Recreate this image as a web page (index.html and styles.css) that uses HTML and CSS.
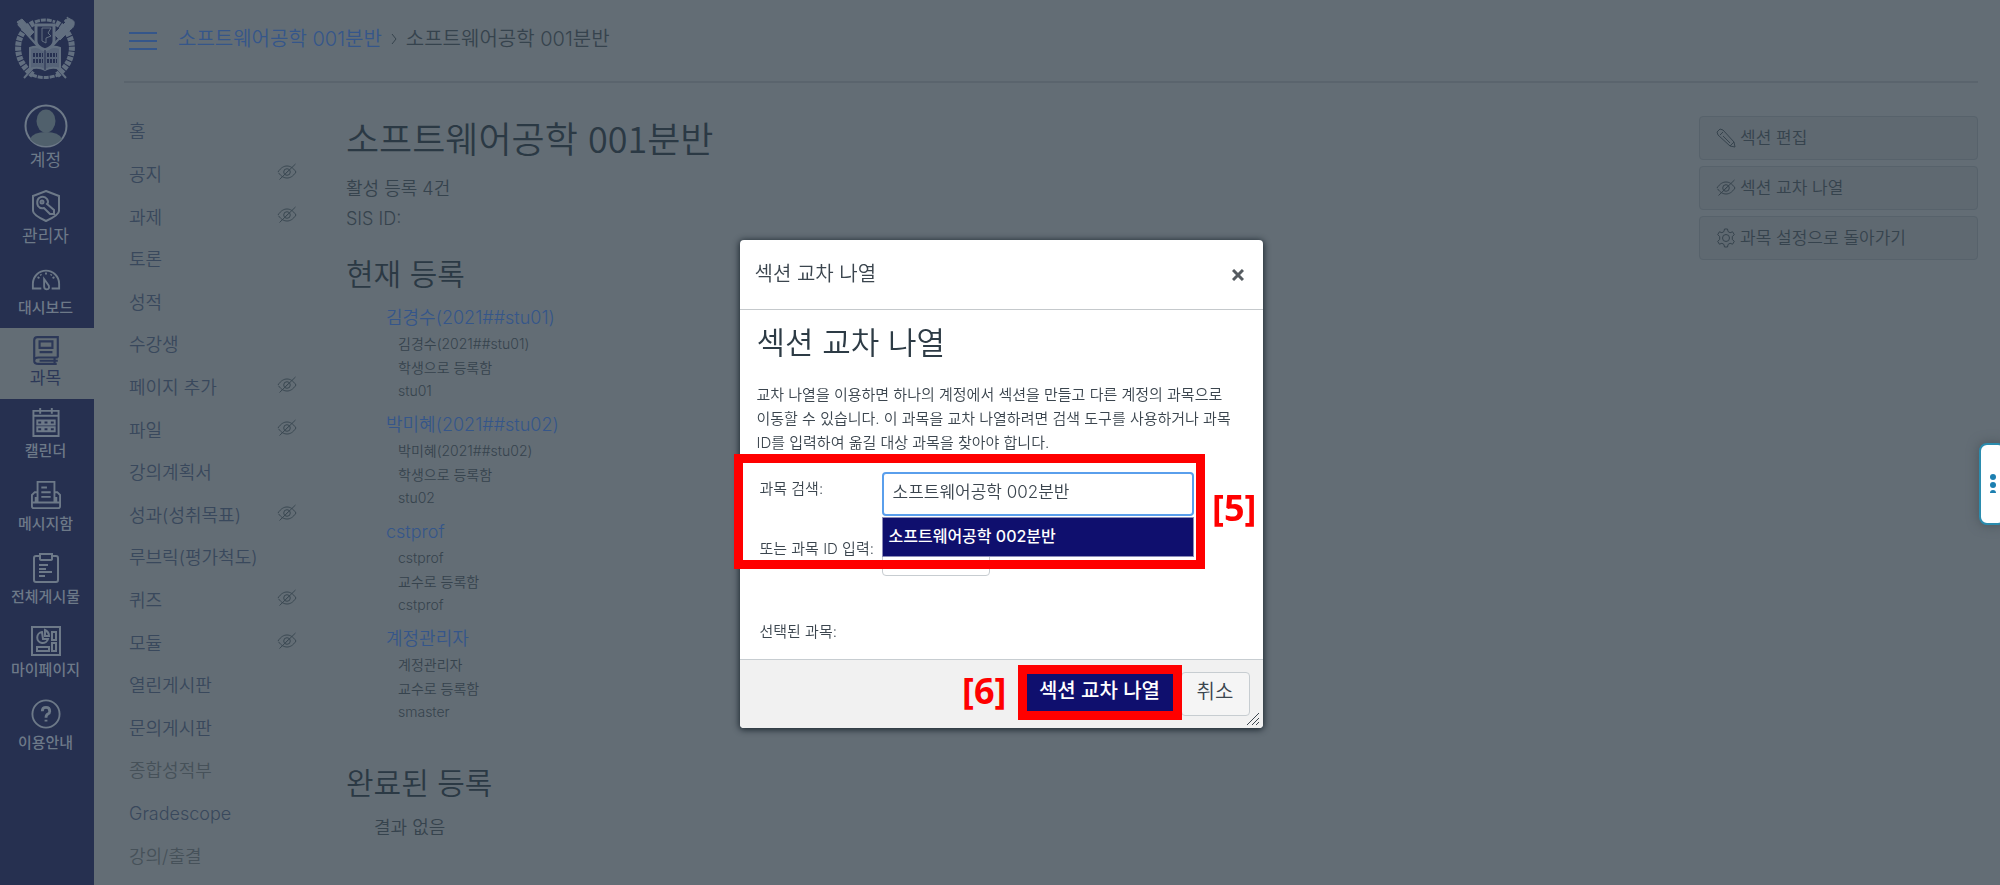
FILE: index.html
```html
<!DOCTYPE html>
<html lang="ko">
<head>
<meta charset="utf-8">
<title>소프트웨어공학 001분반</title>
<link rel="stylesheet" href="styles.css">
</head>
<body>
<svg class="defs" aria-hidden="true">
  <symbol id="eye-off" viewBox="0 0 20 18"><path d="M1 9C4 4.500 7 3 10 3s6 1.500 9 6c-3 4.500-6 6-9 6S4 13.500 1 9z" stroke-dasharray="44 3"/><circle cx="10" cy="9" r="3.300"/><path d="M2.500 16.500L18.500 1M8.500 10.500l3-3"/></symbol>
</svg>
<div class="app">
  <nav class="rail" aria-label="전역 탐색">
    <a class="crest" href="#" aria-label="서울대학교">
      <svg viewBox="0 0 62 66">
        <g stroke="#626f80" fill="none">
          <path d="M4 8l48 54M58 8L10 62" stroke-width="2"/>
          <path d="M3 6l5-3 12 13-5 5z" fill="#626f80"/>
          <path d="M40 18l12-12 6 6-12 12z" fill="#626f80"/>
          <path d="M51 6c-2-4 4-1 2-5 5 4 8 2 7 8-1 4-4 5-7 4" fill="#626f80"/>
          <path d="M20 7C0 16-2 44 19 59M42 7c20 9 22 37 1 52" stroke-width="6" stroke-dasharray="4 1"/>
          <path d="M18 59q13 5 26 0M21 6q10-4 20 0" stroke-width="3" stroke-dasharray="5 1"/>
          <path d="M16 32q8-3 15 2 7-5 15-2v21q-8-3-15 1-7-4-15-1z" fill="#566378" stroke-width="2"/>
          <path d="M22 9h18v16q0 6-9 9-9-3-9-9z" fill="#263050" stroke-width="3"/>
          <path d="M28 12h9l-3 5 3 3-5 2v5l-4-2z" stroke-width="1"/>
          <path d="M19 39h10M19 45h10M33 39h10M33 45h10" stroke="#263050" stroke-width="4" stroke-dasharray="2 1"/>
          <path d="M31 34v20" stroke="#263050"/>
        </g>
      </svg>
    </a>
    <a class="rail-item account" href="#">
      <svg class="avatar" viewBox="0 0 44 44"><circle cx="22" cy="22" r="20.500" fill="#263050"/><path d="M6 35q3-7 16-7t16 7q-6 7-16 7T6 35z" fill="#50606c" stroke="none"/><ellipse cx="22" cy="17" rx="9.500" ry="11.500" fill="#50606c" stroke="none"/></svg>
      <span>계정</span></a>
    <a class="rail-item admin" href="#">
      <svg viewBox="0 0 32 32"><path d="M16 1l13 5v15q0 4-13 10Q3 25 3 21V6z"/><path d="M9 8q5-3 8 1 2 3 0 5l7 6v4h-4l-6-6q-4 1-6-2-2-5 1-8z"/><circle cx="12" cy="12" r="1.500"/></svg>
      <span>관리자</span></a>
    <a class="rail-item dash small" href="#">
      <svg viewBox="0 0 32 24"><path d="M11 21H2v-5a14 14 0 0 1 28 0v5h-8"/><path d="M14 11l5 7q1 4-2 4-3 0-3-3z"/><path d="M16 4v2M7 9l2 1M25 9l-2 1M10 6l1 1M22 6l-1 1"/></svg>
      <span>대시보드</span></a>
    <a class="rail-item active" href="#">
      <svg viewBox="0 0 28 28"><path d="M25 21V2H6Q3 2 3 5v18M25 21H7q-4 0-4 3t4 3h17M8 24h17M22 21v6M8 6h12v6H8zM8 16h12"/></svg>
      <span>과목</span></a>
    <a class="rail-item small" href="#">
      <svg viewBox="0 0 30 31"><path d="M2 4h26v26H2zM2 9h26M9 1v6M21 1v6M6 14h5v4H6zM12.500 14h5v4h-5zM19 14h5v4h-5zM6 21h5v4H6zM12.500 21h5v4h-5zM19 21h5v4h-5z"/></svg>
      <span>캘린더</span></a>
    <a class="rail-item small" href="#">
      <svg viewBox="0 0 32 30"><path d="M7 23V1h18v22M7 12H4l-3 3v12q0 2 2 2h26q2 0 2-2V15l-3-3h-3M1 23h30M5 17v6M27 17v6M11 7h6M11 12h10M11 17h10"/></svg>
      <span>메시지함</span></a>
    <a class="rail-item small" href="#">
      <svg viewBox="0 0 30 30"><path d="M9 3H5Q3 3 3 5v22q0 2 2 2h20q2 0 2-2V5q0-2-2-2h-4M9 1h12v5q0 1-2 1h-8q-2 0-2-1zM8 12h9M8 16h7M8 19h13M8 23h6"/></svg>
      <span>전체게시물</span></a>
    <a class="rail-item small" href="#">
      <svg viewBox="0 0 30 30"><path d="M1 1h28v28H1z"/><path d="M11 6a5.500 5.500 0 1 0 6 7h-5zM14 4v6h4q0-4-4-6zM21 6h4v8h-4zM21 17h4v8h-4zM6 21h12v4H6z"/></svg>
      <span>마이페이지</span></a>
    <a class="rail-item small" href="#">
      <svg class="help" viewBox="0 0 32 32"><circle cx="16" cy="16" r="14.500"/><path d="M12 13q0-4 4-4t4 4q0 2-2 3-2 1-2 4M16 22v2" stroke-width="3"/></svg>
      <span>이용안내</span></a>
  </nav>

  <div class="page">
    <header class="topbar">
      <button class="burger" type="button" aria-label="메뉴"><i></i><i></i><i></i></button>
      <a href="#">소프트웨어공학 001분반</a>
      <svg class="chev" viewBox="0 0 6 12"><path d="M1 1l4 5-4 5"/></svg>
      <span>소프트웨어공학 001분반</span>
    </header>
    <div class="columns">
      <nav class="menu" aria-label="과목 메뉴">
        <a href="#">홈</a>
        <a href="#">공지<svg><use href="#eye-off"/></svg></a>
        <a href="#">과제<svg><use href="#eye-off"/></svg></a>
        <a href="#">토론</a>
        <a href="#">성적</a>
        <a href="#">수강생</a>
        <a href="#">페이지 추가<svg><use href="#eye-off"/></svg></a>
        <a href="#">파일<svg><use href="#eye-off"/></svg></a>
        <a href="#">강의계획서</a>
        <a href="#">성과(성취목표)<svg><use href="#eye-off"/></svg></a>
        <a href="#">루브릭(평가척도)</a>
        <a href="#">퀴즈<svg><use href="#eye-off"/></svg></a>
        <a href="#">모듈<svg><use href="#eye-off"/></svg></a>
        <a href="#">열린게시판</a>
        <a href="#">문의게시판</a>
        <a class="dim" href="#">종합성적부</a>
        <a href="#">Gradescope</a>
        <a class="dim" href="#">강의/출결</a>
      </nav>
      <main class="content">
        <h1>소프트웨어공학 001분반</h1>
        <p>활성 등록 4건</p>
        <p>SIS ID:</p>
        <h2>현재 등록</h2>
        <ul class="users">
          <li><a href="#">김경수(2021##stu01)</a><div>김경수(2021##stu01)</div><div>학생으로 등록함</div><div>stu01</div></li>
          <li><a href="#">박미혜(2021##stu02)</a><div>박미혜(2021##stu02)</div><div>학생으로 등록함</div><div>stu02</div></li>
          <li><a href="#">cstprof</a><div>cstprof</div><div>교수로 등록함</div><div>cstprof</div></li>
          <li><a href="#">계정관리자</a><div>계정관리자</div><div>교수로 등록함</div><div>smaster</div></li>
        </ul>
        <h2>완료된 등록</h2>
        <p class="none">결과 없음</p>
      </main>
      <aside class="actions">
        <button type="button"><svg viewBox="0 0 20 20"><path d="M1 4l3-3 3 1 11 12 1 5-5-1L2 7zM4 7l3-3M14 18l4-4M7 8l7 7"/></svg>섹션 편집</button>
        <button type="button"><svg><use href="#eye-off"/></svg>섹션 교차 나열</button>
        <button type="button"><svg viewBox="0 0 20 20"><path d="M8.500 1h3l.6 2.600 2 1.100 2.500-.9 1.700 2.900-2 1.800v3l2 1.800-1.700 2.900-2.500-.9-2 1.100-.6 2.600h-3l-.6-2.600-2-1.100-2.500.9-1.700-2.900 2-1.800v-3l-2-1.800 1.700-2.900 2.500.9 2-1.100z"/><circle cx="10" cy="10" r="3.500"/></svg>과목 설정으로 돌아가기</button>
      </aside>
    </div>
  </div>
</div>

<div class="backdrop">
  <section class="dialog" role="dialog" aria-labelledby="dlg-title">
    <header class="dlg-head">
      <span id="dlg-title">섹션 교차 나열</span>
      <button type="button" aria-label="닫기"><svg viewBox="0 0 12 12"><path d="M1 1l10 10M11 1L1 11"/></svg></button>
    </header>
    <form class="dlg-body">
      <h2>섹션 교차 나열</h2>
      <p>교차 나열을 이용하면 하나의 계정에서 섹션을 만들고 다른 계정의 과목으로 이동할 수 있습니다. 이 과목을 교차 나열하려면 검색 도구를 사용하거나 과목 ID를 입력하여 옮길 대상 과목을 찾아야 합니다.</p>
      <div class="fields">
        <label for="q">과목 검색:</label>
        <div class="combo">
          <input id="q" type="text" value="소프트웨어공학 002분반">
          <div class="options" role="listbox"><div role="option" aria-selected="true">소프트웨어공학 002분반</div></div>
        </div>
        <label for="cid">또는 과목 ID 입력:</label>
        <input id="cid" class="short" type="text">
        <div class="mark mark-fields"></div>
        <strong class="num num-fields">[5]</strong>
      </div>
      <div class="chosen">선택된 과목:</div>
    </form>
    <footer class="dlg-foot">
      <strong class="num">[6]</strong>
      <div class="primary-wrap"><button class="primary" type="button">섹션 교차 나열</button><div class="mark mark-btn"></div></div>
      <button class="cancel" type="button">취소</button>
      <svg class="grip" viewBox="0 0 14 14"><path d="M1 13L13 1M6 13l7-7M10 13l3-3"/></svg>
    </footer>
  </section>
</div>
<button class="tab" type="button" aria-label="더 보기"><svg viewBox="0 0 8 20"><circle cx="4" cy="3" r="3"/><circle cx="4" cy="11" r="3"/><path d="M1 19a3 3 0 0 1 6 0z"/></svg></button>
</body>
</html>
```
FILE: styles.css
```css
* { box-sizing: border-box; }
body {
  margin: 0;
  background: #636d75;
  color: #36434d;
  font: 18px/24px Inter, "Noto Sans CJK KR", sans-serif;
  font-weight: 350;
}
a { color: inherit; text-decoration: none; }
button, input { font: inherit; color: inherit; margin: 0; }
h1, h2, p, ul { margin: 0; padding: 0; font-weight: 350; }
svg { display: block; fill: none; stroke: currentColor; }
.defs { position: absolute; width: 0; height: 0; }

.app { display: flex; height: 100vh; min-height: 760px; overflow: hidden; }

/* Global rail */
.rail {
  flex: 0 0 94px;
  background: #263050;
  color: #6d7988;
  text-align: center;
  padding-top: 16px;
}
.crest { display: block; margin: 0 16px 22px 14px; }
.crest svg { width: 62px; height: 66px; }
.rail-item {
  display: flex;
  flex-direction: column;
  align-items: center;
  gap: 2px;
  height: 73px;
  padding: 8px 3px 0 0;
  font-size: 17px;
  font-weight: 400;
  line-height: 24px;
}
.rail-item svg { width: 30px; height: 30px; stroke-width: 2; }
.rail-item .avatar { width: 44px; height: 44px; margin: -8px 0 -2px; }
.rail-item.account { height: 77px; }
.rail-item.admin { padding-top: 9px; height: 77px; }
.rail-item.admin svg { width: 32px; height: 32px; }
.rail-item.dash { height: 70px; }
.rail-item.dash svg { height: 28px; }
.rail-item.active { background: #636d75; color: #2c3858; height: 71px; padding-top: 7px; gap: 1px; }
.rail .small { font-size: 15px; font-weight: 500; }

/* Page */
.page { flex: 1; display: flex; flex-direction: column; padding: 0 22px 0 30px; }
.topbar {
  display: flex;
  align-items: center;
  height: 83px;
  padding: 0 0 4px 5px;
  border-bottom: 2px solid #5a646d;
  font-size: 20px;
}
.topbar a { color: #35568a; }
.burger {
  display: flex;
  flex-direction: column;
  gap: 6px;
  width: 28px;
  margin-right: 21px;
  padding: 4px 0 0;
  border: 0;
  background: none;
}
.burger i { height: 2px; background: #35568a; }
.chev { width: 6px; height: 12px; margin: 0 9px; }
.columns { flex: 1; display: flex; padding-left: 5px; }
.menu {
  width: 168px;
  display: flex;
  flex-direction: column;
  padding: 28px 0 7px;
  color: #39485c;
}
.menu a { flex: 1; display: flex; align-items: center; justify-content: space-between; }
.menu svg { width: 20px; height: 18px; margin-bottom: 6px; color: #3a4852; }
.menu .dim { color: #465159; }

.content { flex: 1; padding: 24px 0 0 49px; }
.content h1 { font-size: 36px; line-height: 60px; margin-bottom: 7px; color: #2b3944; font-family: "Noto Sans CJK KR", sans-serif; }
.content h2 { font-size: 30px; line-height: 40px; color: #2b3944; }
.content p { line-height: 30px; }
.content p + h2 { margin-top: 20px; }
.users { list-style: none; padding: 10px 0 0 40px; }
.users li { padding-left: 12px; margin-bottom: 9px; font-size: 14px; }
.users a { display: block; margin-left: -12px; font-size: 18px; line-height: 28px; color: #35568a; }
.users div { line-height: 24px; }
.users div:last-child { line-height: 22px; }
.content .users + h2 { margin-top: 40px; }
.content .none { padding-left: 28px; margin-top: 10px; }

.actions { width: 279px; display: flex; flex-direction: column; gap: 6px; padding-top: 33px; font-size: 17px; }
.actions button {
  display: flex;
  align-items: center;
  gap: 4px;
  height: 44px;
  padding: 0 16px;
  border: 1px solid #57626b;
  border-radius: 4px;
  background: #5f6971;
}
.actions svg { width: 20px; height: 20px; }

/* Dialog */
.backdrop { position: fixed; inset: 0; display: flex; justify-content: center; align-items: flex-start; padding: 240px 0 0 2px; }
.dialog {
  width: 523px;
  background: #fff;
  border-radius: 4px;
  box-shadow: 0 1px 6px 1px #1f2a33;
  color: #3b454e;
}
.dlg-head {
  display: flex;
  align-items: center;
  justify-content: space-between;
  height: 70px;
  padding: 0 19px 2px 15px;
  border-bottom: 1px solid #c5c9cc;
  font-size: 20px;
}
.dlg-head button { border: 0; padding: 3px 0 0; background: none; color: #555b60; }
.dlg-head svg { width: 12px; height: 12px; stroke-width: 3; }
.dlg-body { padding: 11px 14px 15px 17px; font-size: 15px; }
.dlg-body h2 { font-size: 31px; line-height: 44px; margin-bottom: 18px; color: #2d3b45; }
.dlg-body p { line-height: 24px; margin-bottom: 17px; padding-right: 6px; word-break: keep-all; }
.fields {
  position: relative;
  display: grid;
  grid-template-columns: 119px 312px;
  column-gap: 3px;
  row-gap: 16px;
  padding-left: 3px;
}
.fields label { padding-top: 5px; white-space: nowrap; }
.fields input {
  display: block;
  width: 100%;
  height: 44px;
  padding: 0 9px 8px;
  border: 1px solid #c7cdd1;
  border-radius: 4px;
  background: #fff;
  font-size: 17px;
}
.combo { position: relative; }
.fields .combo input { border: 2px solid #5a9fec; outline: 0; }
.fields .short { width: 108px; }
.options {
  position: absolute;
  top: 45px;
  left: 0;
  right: 0;
  padding: 6px 6px 8px;
  border: 1px solid #8c8cb8;
  background: #0f0f6e;
  color: #fff;
  font-size: 16px;
  font-weight: 500;
}
.mark { position: absolute; border: 9px solid #f00; pointer-events: none; }
.mark-fields { inset: -18px 44px 7px -23px; }
.num { color: #f00; font: 700 36px/40px "Noto Sans", sans-serif; }
.num-fields { position: absolute; top: 16px; right: -8px; }
.chosen { padding: 44px 0 0 3px; }
.dlg-foot {
  position: relative;
  display: flex;
  align-items: flex-start;
  justify-content: flex-end;
  height: 69px;
  padding: 12px 13px 0 0;
  border-top: 1px solid #c7cdd1;
  border-radius: 0 0 4px 4px;
  background: #f1f1f1;
  font-size: 20px;
}
.dlg-foot .num { margin-top: -1px; }
.primary-wrap { position: relative; margin: 2px 9px 0 20px; }
.primary { display: block; width: 146px; height: 37px; padding: 0 0 3px; border: 0; background: #0f0f6e; color: #fff; font-size: 20px; font-weight: 500; }
.mark-btn { inset: -9px; }
.cancel { width: 69px; height: 44px; margin-left: -1px; padding: 0 0 4px; border: 1px solid #c7cdd1; border-radius: 4px; background: #f5f5f5; }
.grip { position: absolute; right: 3px; bottom: 2px; width: 14px; height: 14px; }

.tab {
  position: fixed;
  top: 443px;
  right: -6px;
  width: 27px;
  height: 82px;
  padding: 0 0 0 8px;
  border: 2px solid #2b8cae;
  border-radius: 8px;
  background: #fff;
  box-shadow: 0 0 12px #4b545b;
  color: #1c7fb0;
}
.tab svg { width: 8px; height: 20px; fill: currentColor; stroke: none; }
```
